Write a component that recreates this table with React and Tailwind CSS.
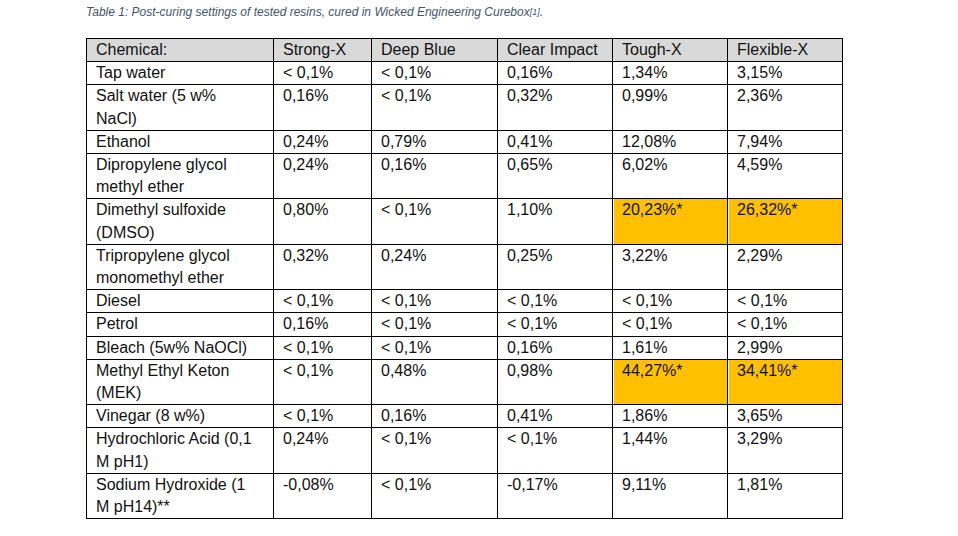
import React from 'react';

const COLS = ['Chemical:', 'Strong-X', 'Deep Blue', 'Clear Impact', 'Tough-X', 'Flexible-X'];

// each row: chemical name split in the lines of the picture, then the five values
const ROWS = [
  { name: ['Tap water'], v: ['< 0,1%', '< 0,1%', '0,16%', '1,34%', '3,15%'] },
  { name: ['Salt water (5 w%', 'NaCl)'], v: ['0,16%', '< 0,1%', '0,32%', '0,99%', '2,36%'] },
  { name: ['Ethanol'], v: ['0,24%', '0,79%', '0,41%', '12,08%', '7,94%'] },
  { name: ['Dipropylene glycol', 'methyl ether'], v: ['0,24%', '0,16%', '0,65%', '6,02%', '4,59%'] },
  { name: ['Dimethyl sulfoxide', '(DMSO)'], v: ['0,80%', '< 0,1%', '1,10%', '20,23%*', '26,32%*'], hot: true },
  { name: ['Tripropylene glycol', 'monomethyl ether'], v: ['0,32%', '0,24%', '0,25%', '3,22%', '2,29%'] },
  { name: ['Diesel'], v: ['< 0,1%', '< 0,1%', '< 0,1%', '< 0,1%', '< 0,1%'] },
  { name: ['Petrol'], v: ['0,16%', '< 0,1%', '< 0,1%', '< 0,1%', '< 0,1%'] },
  { name: ['Bleach (5w% NaOCl)'], v: ['< 0,1%', '< 0,1%', '0,16%', '1,61%', '2,99%'] },
  { name: ['Methyl Ethyl Keton', '(MEK)'], v: ['< 0,1%', '0,48%', '0,98%', '44,27%*', '34,41%*'], hot: true },
  { name: ['Vinegar (8 w%)'], v: ['< 0,1%', '0,16%', '0,41%', '1,86%', '3,65%'] },
  { name: ['Hydrochloric Acid (0,1', 'M pH1)'], v: ['0,24%', '< 0,1%', '< 0,1%', '1,44%', '3,29%'] },
  { name: ['Sodium Hydroxide (1', 'M pH14)**'], v: ['-0,08%', '< 0,1%', '-0,17%', '9,11%', '1,81%'] },
];

const cell = 'border border-black px-[9px] py-0 align-top text-left font-normal whitespace-nowrap';

export default function App() {
  return (
    <div className="w-[958px] h-[536px] bg-white text-[#111] overflow-hidden" style={{ fontFamily: '"Liberation Sans", Arial, sans-serif' }}>
      <div className="pl-[86px] pt-[4px] h-[38px]">
        <p className="text-[12px] italic text-[#44546a] leading-[16px]">
          Table 1: Post-curing settings of tested resins, cured in Wicked Engineering Curebox
          <sup className="text-[9px] relative -top-[1px]">[1]</sup>.
        </p>
      </div>
      <table className="ml-[86px] table-fixed border-collapse text-[16px] leading-[22.2px]">
        <colgroup>
          <col className="w-[187px]" />
          <col className="w-[98px]" />
          <col className="w-[126px]" />
          <col className="w-[115px]" />
          <col className="w-[115px]" />
          <col className="w-[115px]" />
        </colgroup>
        <thead>
          <tr className="bg-[#d9d9d9]">
            {COLS.map((c) => (
              <th key={c} className={cell}>{c}</th>
            ))}
          </tr>
        </thead>
        <tbody>
          {ROWS.map((r, i) => (
            <tr key={i}>
              <td className={cell}>
                {r.name.map((l, j) => (
                  <div key={j}>{l}</div>
                ))}
              </td>
              {r.v.map((v, j) => (
                <td
                  key={j}
                  className={
                    r.hot && j >= 3
                      ? cell + ' bg-[#ffc000] shadow-[inset_1px_0_0_#ffffff]'
                      : cell
                  }
                >
                  {v}
                </td>
              ))}
            </tr>
          ))}
        </tbody>
      </table>
    </div>
  );
}
